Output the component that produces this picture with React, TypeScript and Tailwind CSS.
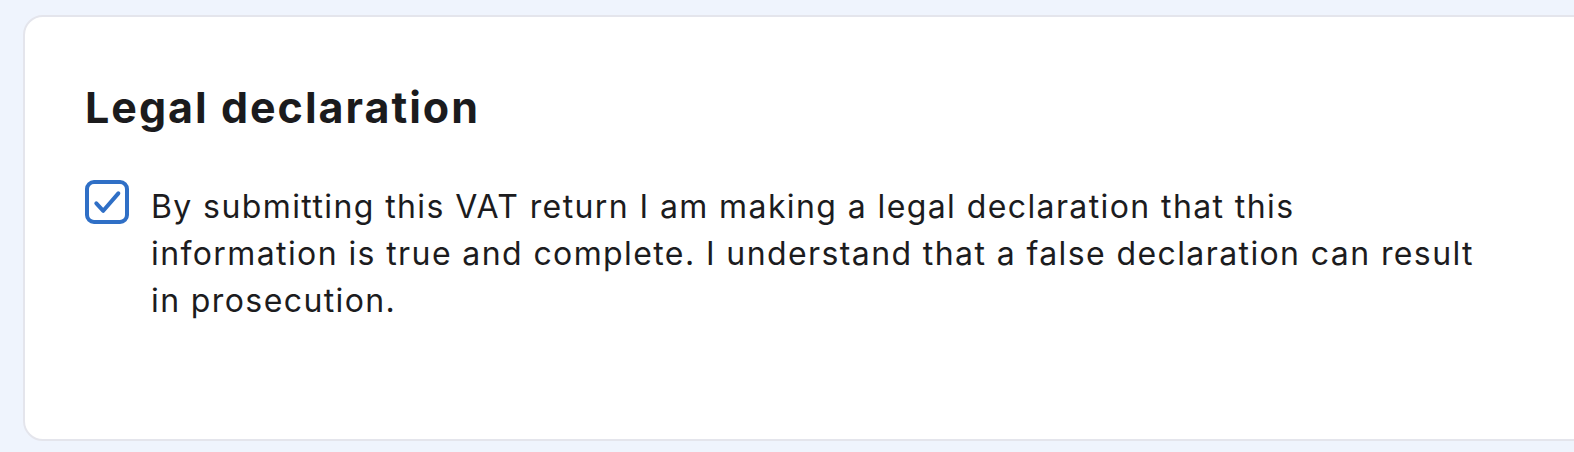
import React, { useState } from 'react';

const App: React.FC = () => {
  const [checked, setChecked] = useState(true);

  return (
    <div className="w-[1574px] h-[452px] overflow-hidden bg-[#eff4fd] pt-[15px] pl-[23px]" style={{ fontFamily: 'Inter, "Noto Sans", sans-serif' }}>
      <div className="w-[1600px] h-[426px] bg-white border-2 border-[#e4e5ec] rounded-[20px] pl-[60px] pt-[64px]">
        <h2 className="text-[43px] leading-[52px] font-bold text-[#1b1b1d] tracking-[2px]">Legal declaration</h2>

        {/* Checkbox row */}
        <div className="flex items-start gap-[22px] mt-[47px]">
          <button
            onClick={() => setChecked(!checked)}
            className="w-[44px] h-[44px] shrink-0 rounded-[9px] border-[4px] border-[#2f6fc6] bg-white flex items-center justify-center"
          >
            {checked && (
              <svg width="32" height="32" viewBox="0 0 24 24" fill="none">
                <path d="M4 13l5.2 5.6L20.5 5.5" stroke="#2f6fc6" strokeWidth="3" strokeLinecap="round" strokeLinejoin="round" />
              </svg>
            )}
          </button>
          <p className="w-[1400px] pt-[3px] text-[32px] leading-[47px] text-[#1c1c1e] tracking-[1.4px]">
            By submitting this VAT return I am making a legal declaration that this
            <br />
            information is true and complete. I understand that a false declaration can result
            <br />
            in prosecution.
          </p>
        </div>
      </div>
    </div>
  );
};

export default App;
